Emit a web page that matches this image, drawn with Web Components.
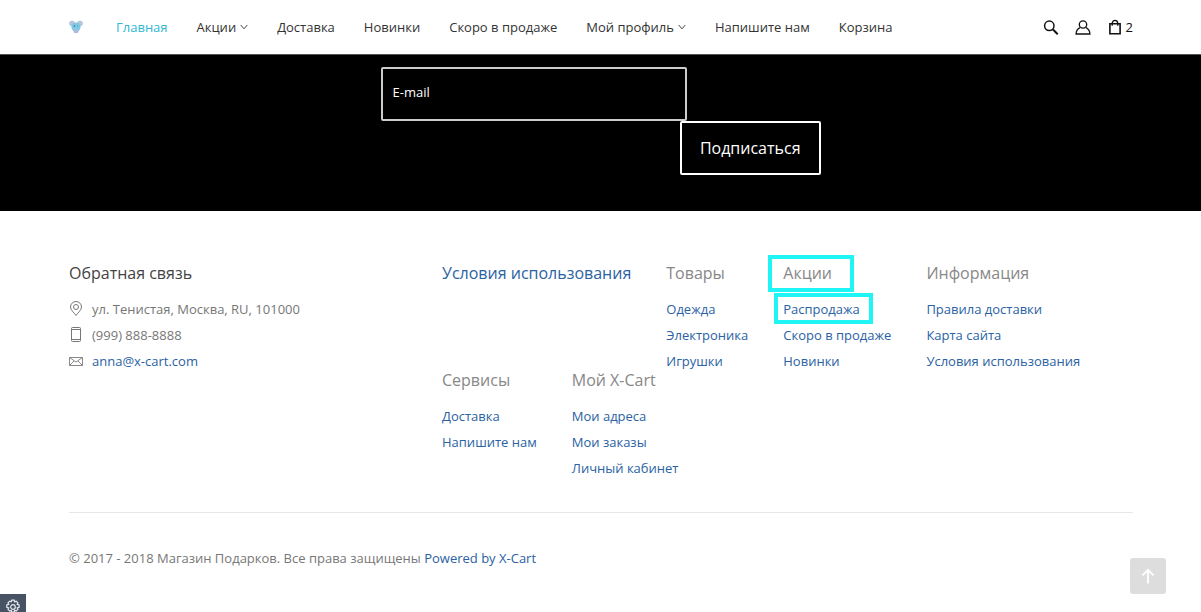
<!DOCTYPE html>
<html lang="ru">
<head>
<meta charset="utf-8">
<meta name="viewport" content="width=device-width, initial-scale=1">
<title>Магазин Подарков</title>
<style>
html { background: #fff; }
body { margin: 0; font: 13px/26px "Open Sans", "Noto Sans", sans-serif; color: #777; }
</style>
</head>
<body>
<shop-page>
  <shop-header slot="header"></shop-header>
  <subscribe-form></subscribe-form>
  <shop-footer></shop-footer>
</shop-page>

<script>
const define = (name, html) => customElements.define(name, class extends HTMLElement {
  constructor() {
    super();
    const t = document.createElement('template');
    t.innerHTML = html;
    this.attachShadow({ mode: 'open' }).append(t.content.cloneNode(true));
  }
});

define('shop-page', `
<style>
:host { display: block; min-height: 100vh; position: relative; }
to-top { position: fixed; right: 35px; bottom: 18px; }
admin-gear { position: fixed; left: 0; bottom: 0; }
</style>
<slot name="header"></slot>
<main><slot></slot></main>
<to-top></to-top>
<admin-gear></admin-gear>`);

define('nav-item', `
<style>
:host { display: block; }
a { display: flex; align-items: center; gap: 4px; color: #333; text-decoration: none; white-space: nowrap; }
:host([current]) a { color: #2fb9d4; }
svg { display: none; }
:host([menu]) svg { display: block; }
</style>
<a href="#"><slot></slot><svg width="8" height="6" viewBox="0 0 8 6" fill="none" stroke="#444" aria-hidden="true"><path d="M.7 1 4 4.8 7.3 1"/></svg></a>`);

define('shop-header', `
<style>
:host { display: flex; align-items: center; box-sizing: border-box; height: 55px; padding: 0 68px; background: #fff; border-bottom: 1px solid #555; }
.logo { display: flex; margin-right: 32px; }
nav { display: flex; gap: 29px; flex: 1; }
.tools { display: flex; align-items: center; gap: 16px; }
.tools a { display: flex; align-items: center; gap: 3px; color: #111; text-decoration: none; }
.tools svg { display: block; }
</style>
<a class="logo" href="#" aria-label="Магазин Подарков">
<svg width="16" height="16" viewBox="0 0 16 16">
<circle cx="4" cy="4.500" r="2.800" fill="#9fcbdc"/><circle cx="12" cy="4.500" r="2.800" fill="#9fcbdc"/>
<circle cx="4" cy="4.500" r="1.800" fill="#d3b9d8"/><circle cx="12" cy="4.500" r="1.800" fill="#d3b9d8"/>
<ellipse cx="8" cy="8" rx="4.600" ry="4.600" fill="#7cc9e4"/><ellipse cx="8" cy="12" rx="2.600" ry="2.200" fill="#a9bce0"/>
<circle cx="6.400" cy="7" r=".7" fill="#33658a"/><circle cx="9.600" cy="7" r=".5" fill="#4b86a8"/>
</svg></a>
<nav>
<nav-item current>Главная</nav-item>
<nav-item menu>Акции</nav-item>
<nav-item>Доставка</nav-item>
<nav-item>Новинки</nav-item>
<nav-item>Скоро в продаже</nav-item>
<nav-item menu>Мой профиль</nav-item>
<nav-item>Напишите нам</nav-item>
<nav-item>Корзина</nav-item>
</nav>
<div class="tools">
<a href="#" aria-label="Поиск"><svg width="16" height="16" viewBox="0 0 16 16" fill="none" stroke="#111"><circle cx="6.300" cy="6.800" r="4.700" stroke-width="1.500"/><path d="m10 10.500 4.700 4.700" stroke-width="2"/></svg></a>
<a href="#" aria-label="Профиль"><svg width="16" height="16" viewBox="0 0 16 16" fill="none" stroke="#111" stroke-width="1.300"><circle cx="8" cy="5.500" r="3.700"/><path d="M5 8.700C2.600 9.800 1.200 12 1.100 15H14.900C14.800 12 13.400 9.800 11 8.700"/></svg></a>
<a href="#" aria-label="Корзина"><svg width="16" height="16" viewBox="0 0 16 16" fill="none" stroke="#111" stroke-width="1.600"><path d="M2.900 4.800h10.200v10H2.900z"/><path d="M5.200 6.800V4.600C5.200.3 10.800.3 10.800 4.600v2.200" stroke-width="1.300"/></svg>2</a>
</div>`);

define('subscribe-form', `
<style>
:host { display: block; background: #000; padding: 12px 16px 36px; }
form { display: flex; flex-direction: column; align-items: flex-start; max-width: 440px; margin: 0 auto; }
input { box-sizing: border-box; width: 306px; max-width: 100%; height: 54px; padding: 0 10px 4px; border: 2px solid #ccc; border-radius: 2px; background: #000; color: #fff; font: inherit; outline: 0; }
input::placeholder { color: #fff; opacity: 1; }
button { align-self: flex-end; height: 54px; padding: 0 18px; border: 2px solid #fff; border-radius: 2px; background: #000; color: #fff; font: 400 16px/26px "Open Sans", sans-serif; }
</style>
<form><input type="email" placeholder="E-mail" aria-label="E-mail"><button type="button">Подписаться</button></form>`);

define('footer-menu', `
<style>
:host { display: block; }
h2 { position: relative; width: max-content; margin: 0 0 10px; font: 400 16px/26px "Open Sans", sans-serif; color: #888; }
::slotted(a) { display: block; position: relative; width: max-content; color: #2a62a3; text-decoration: none; }
:host([marked]) h2::after { content: ""; position: absolute; inset: -5px -22px -6px -15px; border: 4px solid #1ff5f5; }
</style>
<h2><slot name="title"></slot></h2>
<nav><slot></slot></nav>`);

define('marked-text', `
<style>
:host { display: block; position: relative; }
:host::after { content: ""; position: absolute; inset: -3px -13px -2px -9px; border: 4px solid #1ff5f5; }
</style><slot></slot>`);

define('contact-line', `
<style>
:host { display: flex; align-items: center; gap: 9px; }
::slotted(svg) { display: block; flex: none; }
</style>
<slot name="icon"></slot><span><slot></slot></span>`);

define('shop-footer', `
<style>
:host { display: block; padding: 49px 68px 32px 69px; }
a { color: #2a62a3; text-decoration: none; }
.top { display: grid; grid-template-columns: 373fr 691fr; padding-bottom: 38px; border-bottom: 1px solid #e8e8e8; }
.contact h2 { margin: 0 0 10px; font: 400 16px/26px "Open Sans", sans-serif; color: #444; }
.menus { display: flex; flex-wrap: wrap; column-gap: 35px; }
footer-menu { margin-bottom: -7px; }
p { margin: 32px 0 0; }
</style>
<div class="top">
<section class="contact">
<h2>Обратная связь</h2>
<contact-line><svg slot="icon" width="14" height="16" viewBox="0 0 14 16" fill="none" stroke="#777"><path d="M7 14.500C5 11.500 1.500 9 1.500 6a5.500 5.500 0 0 1 11 0C12.500 9 9 11.500 7 14.500z"/><circle cx="7" cy="6" r="2.500"/></svg>ул. Тенистая, Москва, RU, 101000</contact-line>
<contact-line><svg slot="icon" width="14" height="16" viewBox="0 0 14 16" fill="none" stroke="#777"><rect x="2.500" y=".5" width="9" height="14" rx="1"/><path d="M2.500 2.500h9M2.500 12.500h9"/></svg>(999) 888-8888</contact-line>
<contact-line><svg slot="icon" width="14" height="16" viewBox="0 0 14 16" fill="none" stroke="#888"><path d="M.5 4.500h13v8H.5zl6.500 4.500 6.500-4.500M.5 12.500l4.500-4.500M13.500 12.500 9 8"/></svg><a href="#">anna@x-cart.com</a></contact-line>
</section>
<div class="menus">
<footer-menu><a slot="title" href="#">Условия использования</a></footer-menu>
<footer-menu><span slot="title">Товары</span><a href="#">Одежда</a><a href="#">Электроника</a><a href="#">Игрушки</a></footer-menu>
<footer-menu marked><span slot="title">Акции</span><a href="#"><marked-text>Распродажа</marked-text></a><a href="#">Скоро в продаже</a><a href="#">Новинки</a></footer-menu>
<footer-menu><span slot="title">Информация</span><a href="#">Правила доставки</a><a href="#">Карта сайта</a><a href="#">Условия использования</a></footer-menu>
<footer-menu><span slot="title">Сервисы</span><a href="#">Доставка</a><a href="#">Напишите нам</a></footer-menu>
<footer-menu><span slot="title">Мой X-Cart</span><a href="#">Мои адреса</a><a href="#">Мои заказы</a><a href="#">Личный кабинет</a></footer-menu>
</div>
</div>
<p>© 2017 - 2018 Магазин Подарков. Все права защищены <a href="#">Powered by X-Cart</a></p>`);

define('to-top', `
<style>
:host { display: block; }
button { display: grid; place-items: center; width: 36px; height: 36px; padding: 0; border: 0; border-radius: 3px; background: #ddd; }
svg { display: block; }
</style>
<button type="button" aria-label="Наверх"><svg width="14" height="16" viewBox="0 0 14 16" fill="none" stroke="#fff" stroke-width="1.800"><path d="M7 15.500V2M1.500 7.300 7 1.800l5.500 5.500"/></svg></button>`);

define('admin-gear', `
<style>
:host { display: block; }
button { display: flex; justify-content: center; align-items: flex-start; width: 26px; height: 18px; padding: 5px 0 0; border: 0; background: #475365; overflow: hidden; }
svg { display: block; flex: none; }
</style>
<button type="button" aria-label="Настройки"><svg width="16" height="16" viewBox="0 0 16 16" fill="none" stroke="#e6eaee" stroke-width="1.200"><circle cx="8" cy="8" r="2.300"/><path d="M6.800 1.200h2.400l.5 1.600 1.500-.7 1.700 1.700-.7 1.500 1.900.600v2.400l-1.900.5.700 1.600-1.700 1.700-1.500-.8-.6 1.900H6.800l-.6-1.900-1.500.8L3 10.400l.7-1.600-1.900-.5V5.900l1.900-.6L3 3.800l1.700-1.700 1.500.7z"/></svg></button>`);
</script>
</body>
</html>
